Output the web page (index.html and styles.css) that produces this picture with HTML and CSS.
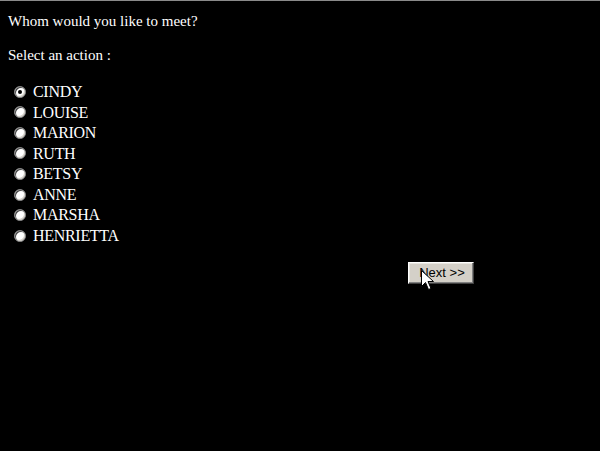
FILE: index.html
```html
<!DOCTYPE html>
<html>
<head>
<meta charset="utf-8">
<link rel="stylesheet" href="styles.css">
</head>
<body>
<div class="page">
  <div class="question">Whom would you like to meet?</div>
  <div class="prompt">Select an action :</div>
  <div class="options">
    <label class="opt"><span class="radio checked"></span>CINDY</label>
    <label class="opt"><span class="radio"></span>LOUISE</label>
    <label class="opt"><span class="radio"></span>MARION</label>
    <label class="opt"><span class="radio"></span>RUTH</label>
    <label class="opt"><span class="radio"></span>BETSY</label>
    <label class="opt"><span class="radio"></span>ANNE</label>
    <label class="opt"><span class="radio"></span>MARSHA</label>
    <label class="opt"><span class="radio"></span>HENRIETTA</label>
  </div>
  <div class="actions">
    <button class="next">Next &gt;&gt;</button>
  </div>
</div>
<svg class="cursor" width="13" height="21" viewBox="0 0 13 21">
  <path d="M0.5 0.5 L0.5 16.5 L4.5 12.5 L7.5 19.5 L10 18.5 L7 11.5 L12.5 11.5 Z" fill="#fff" stroke="#000" stroke-width="1"/>
</svg>
</body>
</html>
```
FILE: styles.css
```css
html, body {
  margin: 0;
  padding: 0;
  background: #000;
}
body {
  border-top: 1px solid #8a8a8a;
  height: 450px;
  overflow: hidden;
  position: relative;
}
.page {
  padding: 11px 8px 0 8px;
  font-family: "Liberation Serif", "Times New Roman", serif;
  font-size: 15px;
  line-height: 18px;
  color: #fff;
}
.question {
  height: 18px;
}
.prompt {
  margin-top: 16px;
  height: 18px;
}
.options {
  margin-top: 18px;
  display: flex;
  flex-direction: column;
  font-size: 16px;
  letter-spacing: -0.3px;
}
.opt {
  display: flex;
  align-items: center;
  height: 20.57px;
  line-height: 20.57px;
}
.radio {
  width: 12px;
  height: 12px;
  box-sizing: border-box;
  border-radius: 50%;
  background: #fff;
  border: 1px solid #808080;
  box-shadow: inset 1px 1px 0 #404040, inset -1px -1px 0 #d4d0c8;
  margin-left: 6px;
  margin-right: 7px;
  margin-top: -1px;
  display: flex;
  align-items: center;
  justify-content: center;
}
.radio.checked::after {
  content: "";
  width: 4px;
  height: 4px;
  border-radius: 50%;
  background: #000;
}
.actions {
  margin-top: 15px;
  display: flex;
}
.next {
  margin-left: 400px;
  width: 66px;
  height: 22px;
  padding: 0 0 0 2px;
  background: #d4d0c8;
  border: 1px solid;
  border-color: #fff #404040 #404040 #fff;
  box-shadow: inset -1px -1px 0 #808080, inset 1px 1px 0 #e8e6e0;
  font-family: "Liberation Sans", Arial, sans-serif;
  font-size: 13px;
  color: #000;
}
.cursor {
  position: absolute;
  left: 421px;
  top: 269px;
}
```
